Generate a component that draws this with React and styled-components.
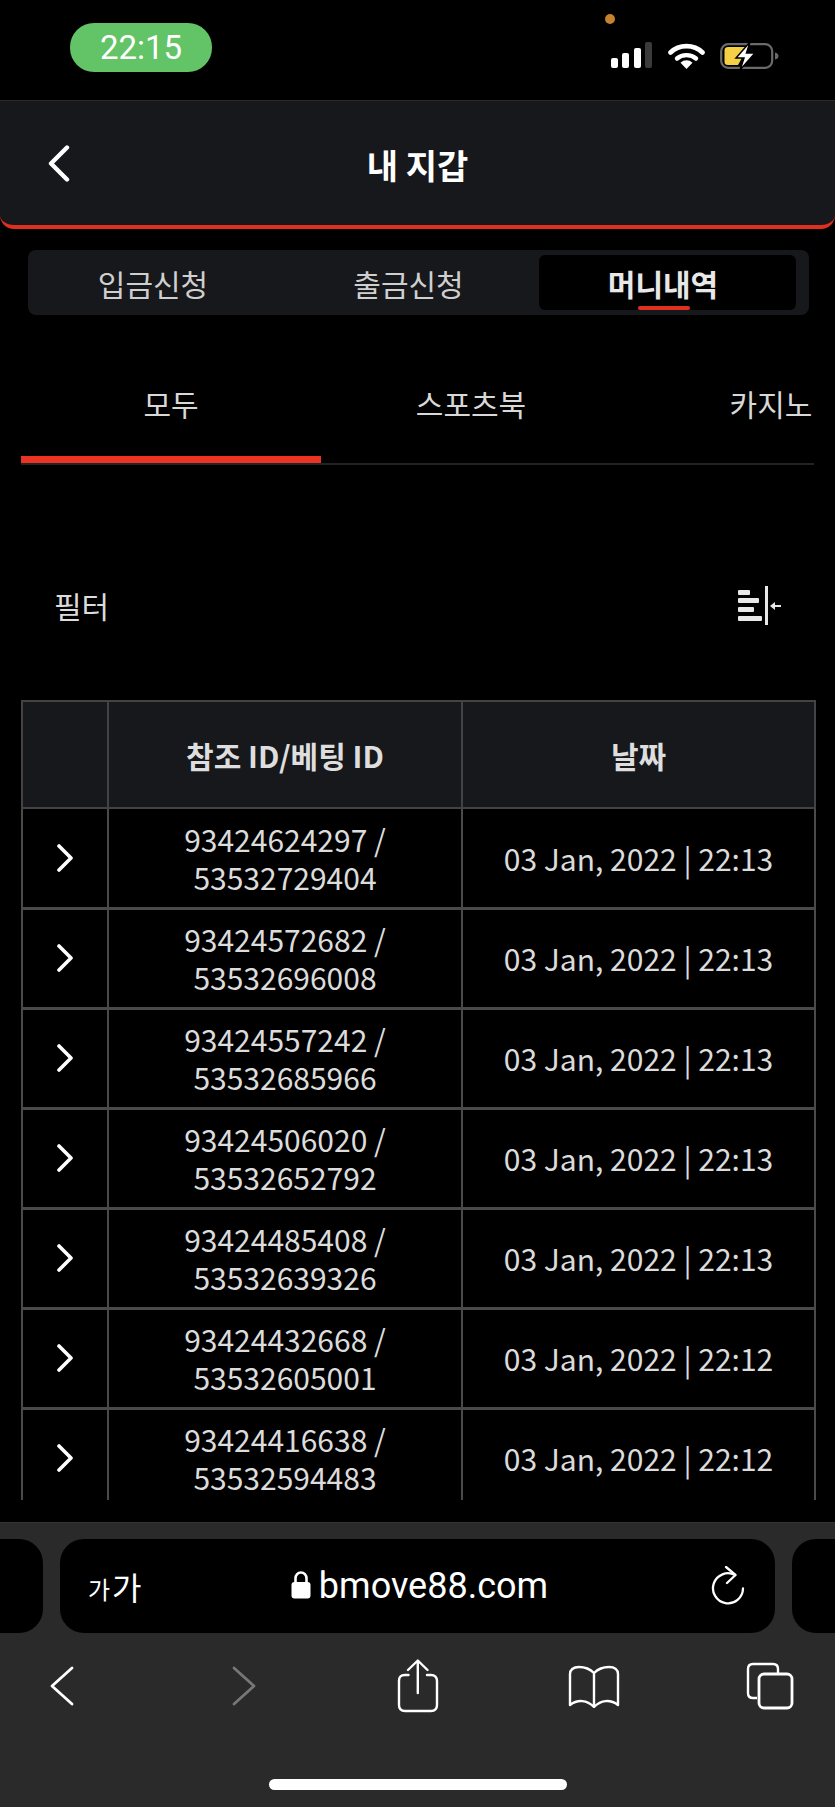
import React from 'react'
import styled, { createGlobalStyle } from 'styled-components';

const rows = [
  ['93424624297', '53532729404', '03 Jan, 2022 | 22:13'],
  ['93424572682', '53532696008', '03 Jan, 2022 | 22:13'],
  ['93424557242', '53532685966', '03 Jan, 2022 | 22:13'],
  ['93424506020', '53532652792', '03 Jan, 2022 | 22:13'],
  ['93424485408', '53532639326', '03 Jan, 2022 | 22:13'],
  ['93424432668', '53532605001', '03 Jan, 2022 | 22:12'],
  ['93424416638', '53532594483', '03 Jan, 2022 | 22:12'],
];

function App() {
  return (
    <Page>
      <GlobalStyle />
      <StatusBar>
        <Clock>22:15</Clock>
        <OrangeDot />
        <StatusIcons>
          <svg width="42" height="27" viewBox="0 0 42 27">
            <rect x="0" y="16" width="7" height="10" rx="2" fill="#fff" />
            <rect x="11" y="11" width="7" height="15" rx="2" fill="#fff" />
            <rect x="23" y="6" width="7" height="20" rx="2" fill="#fff" />
            <rect x="34" y="0" width="7" height="26" rx="2" fill="#3a3a3a" />
          </svg>
          <svg width="37" height="27" viewBox="0 0 37 27">
            <path d="M2.5 10.5C11 2 26 2 34.5 10.5" fill="none" stroke="#fff" strokeWidth="4.6" strokeLinecap="round" />
            <path d="M9 16.5C14 12 23 12 28 16.5" fill="none" stroke="#fff" strokeWidth="4.4" strokeLinecap="round" />
            <path d="M12.5 20.8C16 17.5 21 17.5 24.5 20.8L18.5 27Z" fill="#fff" />
          </svg>
          <svg width="59" height="28" viewBox="0 0 59 28">
            <rect x="1.2" y="2.2" width="51" height="23.6" rx="7" fill="none" stroke="#6a6a6a" strokeWidth="2.2" />
            <path d="M55 10.5C57.5 11 58.5 12.5 58.5 14S57.5 17 55 17.5Z" fill="#6a6a6a" />
            <path d="M8 5H28L18 23H8C5.5 23 4.5 22 4.5 20V8C4.5 6 6 5 8 5Z" fill="#f5cf45" />
            <path d="M30 0L16 16H24L20 28L35 11H26.5Z" fill="#fff" stroke="#000" strokeWidth="1.5" />
          </svg>
        </StatusIcons>
      </StatusBar>

      <Header>
        <BackButton>
          <svg width="24" height="37" viewBox="0 0 24 37">
            <path d="M20 2.5L4 18.5L20 34.5" fill="none" stroke="#fff" strokeWidth="4.4" strokeLinecap="round" strokeLinejoin="round" />
          </svg>
        </BackButton>
        <Title>내 지갑</Title>
      </Header>

      <WalletTabs>
        <WalletTab>입금신청</WalletTab>
        <WalletTab>출금신청</WalletTab>
        <WalletTab $active>머니내역<TabMark /></WalletTab>
      </WalletTabs>

      <CategoryTabs>
        <CategoryTab $active>모두</CategoryTab>
        <CategoryTab>스포츠북</CategoryTab>
        <CategoryTab>카지노</CategoryTab>
      </CategoryTabs>

      <FilterRow>
        <FilterLabel>필터</FilterLabel>
        <svg width="43" height="39" viewBox="0 0 43 39">
          <rect x="0" y="4" width="12" height="5" rx="1" fill="#e8e8e8" />
          <rect x="0" y="12" width="21" height="5" rx="1" fill="#e8e8e8" />
          <rect x="0" y="21" width="16" height="5" rx="1" fill="#e8e8e8" />
          <rect x="0" y="30" width="24" height="5" rx="1" fill="#e8e8e8" />
          <rect x="27" y="0" width="3" height="39" fill="#e8e8e8" />
          <path d="M32 20L37 16V19H43V21H37V24Z" fill="#e8e8e8" />
        </svg>
      </FilterRow>

      <TableClip>
        <Table>
          <colgroup>
            <col width="86" />
            <col width="354" />
            <col width="353" />
          </colgroup>
          <thead>
            <tr>
              <HeadCell />
              <HeadCell>참조 ID/베팅 ID</HeadCell>
              <HeadCell>날짜</HeadCell>
            </tr>
          </thead>
          <tbody>
            {rows.map((row) => (
              <tr key={row[0]}>
                <Cell>
                  <RowChevron>
                    <svg width="18" height="28" viewBox="0 0 18 28">
                      <path d="M3 2L15 14L3 26" fill="none" stroke="#fff" strokeWidth="3.6" strokeLinecap="round" strokeLinejoin="round" />
                    </svg>
                  </RowChevron>
                </Cell>
                <Cell>{row[0]} /<br />{row[1]}</Cell>
                <Cell>{row[2]}</Cell>
              </tr>
            ))}
          </tbody>
        </Table>
      </TableClip>

      <BrowserBar>
        <UrlRow>
          <SideTab $left />
          <UrlBox>
            <AaLabel><small>가</small>가</AaLabel>
            <Address>
              <svg width="20" height="28" viewBox="0 0 20 28">
                <path d="M4.5 12V7.5C4.5 4 7 1.5 10 1.5S15.5 4 15.5 7.5V12" fill="none" stroke="#fff" strokeWidth="2.6" />
                <rect x="0.5" y="11" width="19" height="16.5" rx="3" fill="#fff" />
              </svg>
              bmove88.com
            </Address>
            <svg width="34" height="40" viewBox="0 0 34 40">
              <path d="M24 9A15 15 0 1 0 32 22.5" fill="none" stroke="#fff" strokeWidth="2.3" strokeLinecap="round" />
              <path d="M15 1L24.5 9L16 17" fill="none" stroke="#fff" strokeWidth="2.3" strokeLinecap="round" strokeLinejoin="round" />
            </svg>
          </UrlBox>
          <SideTab />
        </UrlRow>
        <NavRow>
          <NavIcon $gap={0}>
            <svg width="24" height="40" viewBox="0 0 24 40">
              <path d="M22 2L2 20L22 38" fill="none" stroke="#fff" strokeWidth="2.8" strokeLinecap="round" strokeLinejoin="round" />
            </svg>
          </NavIcon>
          <NavIcon $gap={158}>
            <svg width="24" height="40" viewBox="0 0 24 40">
              <path d="M2 2L22 20L2 38" fill="none" stroke="#777" strokeWidth="2.8" strokeLinecap="round" strokeLinejoin="round" />
            </svg>
          </NavIcon>
          <NavIcon $gap={141}>
            <svg width="42" height="54" viewBox="0 0 42 54">
              <path d="M11.5 16H8C3.5 16 2 18 2 22V46C2 50 3.5 52 8 52H34C38 52 40 50 40 46V22C40 18 38 16 34 16H30" fill="none" stroke="#fff" strokeWidth="2.4" strokeLinecap="round" />
              <path d="M20.8 2V34M11 11L20.8 1.5L30.5 11" fill="none" stroke="#fff" strokeWidth="2.4" strokeLinecap="round" strokeLinejoin="round" />
            </svg>
          </NavIcon>
          <NavIcon $gap={129}>
            <svg width="52" height="44" viewBox="0 0 52 44">
              <path d="M26 9C22 5 16 3 11 3C5 3 2 6 2 10V41C10 35 19 36 26 43C33 36 42 35 50 41V10C50 6 47 3 41 3C36 3 30 5 26 9ZM26 9V43" fill="none" stroke="#fff" strokeWidth="2.4" strokeLinejoin="round" />
            </svg>
          </NavIcon>
          <NavIcon $gap={126}>
            <svg width="48" height="48" viewBox="0 0 48 48">
              <path d="M11 36H7C3.5 36 2 34.5 2 31V7C2 3.5 3.5 2 7 2H27C30.5 2 32 3.5 32 7V11" fill="none" stroke="#fff" strokeWidth="2.4" />
              <rect x="13" y="12" width="33" height="34" rx="5" fill="none" stroke="#fff" strokeWidth="2.8" />
            </svg>
          </NavIcon>
        </NavRow>
        <HomeBar />
      </BrowserBar>
    </Page>
  )
}

const GlobalStyle = createGlobalStyle`
    html, body {
        margin: 0;
        padding: 0;
        background: #000;
    }
    * {
        box-sizing: border-box;
    }
`;

const Page = styled.div`
    width: 835px;
    height: 1807px;
    overflow: hidden;
    background: #000;
    color: #e2e2e2;
    font-family: "Noto Sans CJK KR", "Noto Sans", sans-serif;
`;

const StatusBar = styled.div`
    position: relative;
    height: 100px;
    padding: 23px 56px 0 70px;
    display: flex;
    justify-content: space-between;
    align-items: flex-start;
`;

const Clock = styled.div`
    width: 142px;
    height: 49px;
    border-radius: 24px;
    background: #62c467;
    color: #fff;
    display: flex;
    align-items: center;
    justify-content: center;
    font-family: Roboto, sans-serif;
    font-size: 33px;
    font-weight: 400;
`;

const OrangeDot = styled.span`
    position: absolute;
    left: 605px;
    top: 14px;
    width: 10px;
    height: 10px;
    border-radius: 50%;
    background: #c4822e;
`;

const StatusIcons = styled.div`
    margin-top: 19px;
    display: flex;
    align-items: flex-start;
    gap: 15px;
`;

const Header = styled.header`
    position: relative;
    height: 129px;
    background: #17181c;
    border-top: 1px solid #2a2a2c;
    border-bottom: 4px solid #de2f20;
    border-radius: 0 0 14px 14px;
    display: flex;
    align-items: center;
    justify-content: center;
`;

const BackButton = styled.div`
    position: absolute;
    left: 47px;
    top: 44px;
    height: 37px;
`;

const Title = styled.h1`
    margin: 3px 0 0;
    font-size: 34px;
    font-weight: 700;
    color: #fff;
`;

const WalletTabs = styled.div`
    margin: 21px 26px 0 28px;
    height: 65px;
    padding: 5px 13px 5px 0;
    background: #17181c;
    border-radius: 8px;
    display: grid;
    grid-template-columns: 250px 261px 257px;
`;

const WalletTab = styled.div`
    position: relative;
    display: flex;
    align-items: center;
    justify-content: center;
    font-size: 30px;
    font-weight: ${(p) => (p.$active ? 700 : 400)};
    color: ${(p) => (p.$active ? '#e8e8e8' : '#cfcfcf')};
    background: ${(p) => (p.$active ? '#000' : 'transparent')};
    border-radius: 6px;
    padding-right: ${(p) => (p.$active ? '9px' : '0')};
`;

const TabMark = styled.span`
    position: absolute;
    left: 99px;
    bottom: 0;
    width: 52px;
    height: 4px;
    border-radius: 2px;
    background: #e0301e;
`;

const CategoryTabs = styled.div`
    margin: 25px 21px 0;
    height: 125px;
    display: flex;
    overflow: hidden;
    border-bottom: 2px solid #22232a;
`;

const CategoryTab = styled.div`
    flex: 0 0 300px;
    height: 123px;
    padding-top: 10px;
    display: flex;
    align-items: center;
    justify-content: center;
    font-size: 30px;
    color: #d8d8d8;
    border-bottom: 7px solid ${(p) => (p.$active ? '#eb3323' : 'transparent')};
`;

const FilterRow = styled.div`
    margin-top: 100px;
    height: 80px;
    padding: 0 54px;
    display: flex;
    align-items: center;
    justify-content: space-between;
`;

const FilterLabel = styled.span`
    font-size: 30px;
    color: #dcdcdc;
`;

const TableClip = styled.div`
    margin: 55px 16px 0 21px;
    height: 800px;
    overflow: hidden;
`;

const Table = styled.table`
    width: 793px;
    table-layout: fixed;
    border-collapse: collapse;
    text-align: center;
`;

const HeadCell = styled.th`
    height: 107px;
    padding: 0;
    background: #17181c;
    border: 2px solid #434343;
    font-size: 30px;
    font-weight: 700;
    color: #dedede;
`;

const Cell = styled.td`
    height: 100px;
    padding: 0;
    border: 2px solid #4a4a4a;
    border-bottom-width: 3px;
    font-size: 30px;
    line-height: 38px;
    color: #dcdcdc;
`;

const RowChevron = styled.div`
    display: flex;
    justify-content: center;
`;

const BrowserBar = styled.div`
    margin-top: 22px;
    height: 285px;
    background: #2a2a2a;
    border-top: 1px solid #333;
    display: flex;
    flex-direction: column;
`;

const UrlRow = styled.div`
    margin-top: 16px;
    height: 94px;
    display: grid;
    grid-template-columns: 43px 715px 43px;
    justify-content: space-between;
    column-gap: 17px;
`;

const SideTab = styled.div`
    background: #000;
    border-radius: ${(p) => (p.$left ? '0 24px 24px 0' : '24px 0 0 24px')};
`;

const UrlBox = styled.div`
    position: relative;
    background: #000;
    border-radius: 24px;
    display: flex;
    align-items: center;
    justify-content: space-between;
    padding: 0 30px 0 28px;
    color: #fff;
`;

const AaLabel = styled.span`
    width: 60px;
    font-size: 32px;
    line-height: 1;
    white-space: nowrap;
    small {
        font-size: 24px;
        margin-right: 2px;
        vertical-align: 1px;
    }
`;

const Address = styled.span`
    display: flex;
    align-items: center;
    gap: 8px;
    margin-right: 20px;
    font-family: Roboto, sans-serif;
    font-size: 36px;
    svg {
        margin-top: -2px;
    }
`;

const NavRow = styled.div`
    margin-top: 26px;
    height: 54px;
    padding-left: 50px;
    display: flex;
    align-items: center;
`;

const NavIcon = styled.span`
    display: flex;
    margin-left: ${(p) => p.$gap}px;
`;

const HomeBar = styled.div`
    margin: 66px auto 0;
    width: 298px;
    height: 11px;
    border-radius: 6px;
    background: #fff;
`;

export default App
